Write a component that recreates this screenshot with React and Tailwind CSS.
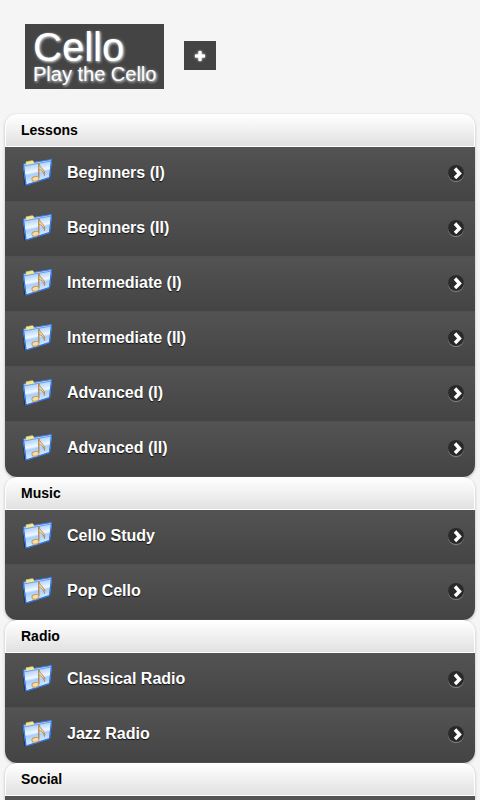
import React from 'react';
import clsx from 'clsx';

const sections = [
  {
    title: 'Lessons',
    items: [
      'Beginners (I)',
      'Beginners (II)',
      'Intermediate (I)',
      'Intermediate (II)',
      'Advanced (I)',
      'Advanced (II)',
    ],
  },
  { title: 'Music', items: ['Cello Study', 'Pop Cello'] },
  { title: 'Radio', items: ['Classical Radio', 'Jazz Radio'] },
  { title: 'Social', items: [] },
];

function FolderIcon() {
  return (
    <svg width="32" height="30" viewBox="0 0 32 30" className="shrink-0" aria-hidden="true">
      <defs>
        <linearGradient id="folder" x1="0" y1="0" x2="0.25" y2="1">
          <stop offset="0" stopColor="#8dbcfb" />
          <stop offset="0.3" stopColor="#c4dcfd" />
          <stop offset="0.5" stopColor="#f0f8ff" />
          <stop offset="0.6" stopColor="#a9cffc" />
          <stop offset="1" stopColor="#def1ff" />
        </linearGradient>
      </defs>
      <path d="M2 12 L3 27 L6 28.5 L6 12 Z" fill="#1c1c1c" opacity="0.5" />
      <path d="M2.5 6 L12 4.5 L30.5 1.5 L29 12 L4 20 Z" fill="#bcd8fc" stroke="#3f80e8" strokeLinejoin="round" />
      <path d="M5 3.8 L11.5 2.5 L13 4 L13 6.5 L5 8 Z" fill="#f3e78f" stroke="#cfc27a" strokeWidth="0.5" />
      <path d="M2.5 8 L30.5 3 L28.5 19.5 L5 27 Z" fill="url(#folder)" stroke="#5b9cf5" strokeWidth="0.9" strokeLinejoin="round" />
      <path d="M2.5 7 L5 27 L28.5 19.5 L30.5 2" stroke="#2f74e2" strokeWidth="1.1" fill="none" />
      <path d="M17.8 5.5 V20" stroke="#b08348" strokeWidth="1.3" fill="none" />
      <path d="M18 5.5 C18.5 10 25 11.5 23.5 17.5 C23 14 20.5 12 18 11.5" fill="#e6c394" fillOpacity="0.5" stroke="#c08d48" strokeWidth="1" />
      <ellipse cx="14.4" cy="20.8" rx="3.5" ry="2.4" fill="#f3dcae" stroke="#c69a5c" strokeWidth="1" transform="rotate(-12 14.4 20.8)" />
    </svg>
  );
}

function ArrowIcon() {
  return (
    <svg width="18" height="18" viewBox="0 0 18 18" className="shrink-0" aria-hidden="true">
      <circle cx="9" cy="10" r="8" fill="#858585" />
      <circle cx="9" cy="9" r="8" fill="#292929" />
      <path d="M8 4.5 L12.5 9.5 L8 14" fill="none" stroke="#fff" strokeWidth="3.4" />
    </svg>
  );
}

function Section({ title, items }) {
  return (
    <section
      className={clsx(
        'overflow-hidden shadow-[0_1px_3px_rgba(0,0,0,0.25)]',
        items.length > 0 ? 'rounded-xl' : 'rounded-t-xl'
      )}
    >
      <h2 className="h-[33px] rounded-t-xl border border-white bg-linear-to-b from-white to-[#e1e1e1] px-[15px] text-sm leading-[31px] font-bold text-black">
        {title}
      </h2>
      {items.length > 0 ? (
        <ul>
          {items.map((item) => (
            <li key={item}>
              <a
                href="#"
                className="flex h-[55px] items-center border-b border-[#505050] bg-linear-to-b from-[#535353] to-[#444444] pr-[10px] pb-0.5 pl-4 text-base font-bold text-white [text-shadow:0_1px_1px_#111]"
              >
                <FolderIcon />
                <span className="ml-[14px] flex-1 truncate">{item}</span>
                <ArrowIcon />
              </a>
            </li>
          ))}
        </ul>
      ) : (
        <div className="h-1 bg-[#535353]" />
      )}
    </section>
  );
}

export default function App() {
  return (
    <div className="min-h-screen bg-[#f5f5f5] font-['Liberation_Sans',Arial,sans-serif]">
      <header className="flex items-start gap-5 px-[25px] pt-6 pb-[25px]">
        <h1 className="bg-[#444] px-2 pt-1 pb-[7px] font-normal whitespace-nowrap text-white">
          <span className="block text-[40px] leading-[38px] [text-shadow:1px_1px_3px_#fff]">Cello</span>
          <span className="block text-xl leading-4 [text-shadow:1px_1px_3px_#fff]">Play the Cello</span>
        </h1>
        <button
          type="button"
          aria-label="Add"
          className="mt-[17px] flex h-[29px] w-8 items-center justify-center bg-[#444]"
        >
          <svg width="12" height="12" viewBox="0 0 12 12" className="drop-shadow-[0_0_1px_#fff]" aria-hidden="true">
            <path d="M6 1 V11 M1 6 H11" stroke="#fff" strokeWidth="3" />
          </svg>
        </button>
      </header>
      <main className="px-[5px]">
        {sections.map((section) => (
          <Section key={section.title} {...section} />
        ))}
      </main>
    </div>
  );
}
